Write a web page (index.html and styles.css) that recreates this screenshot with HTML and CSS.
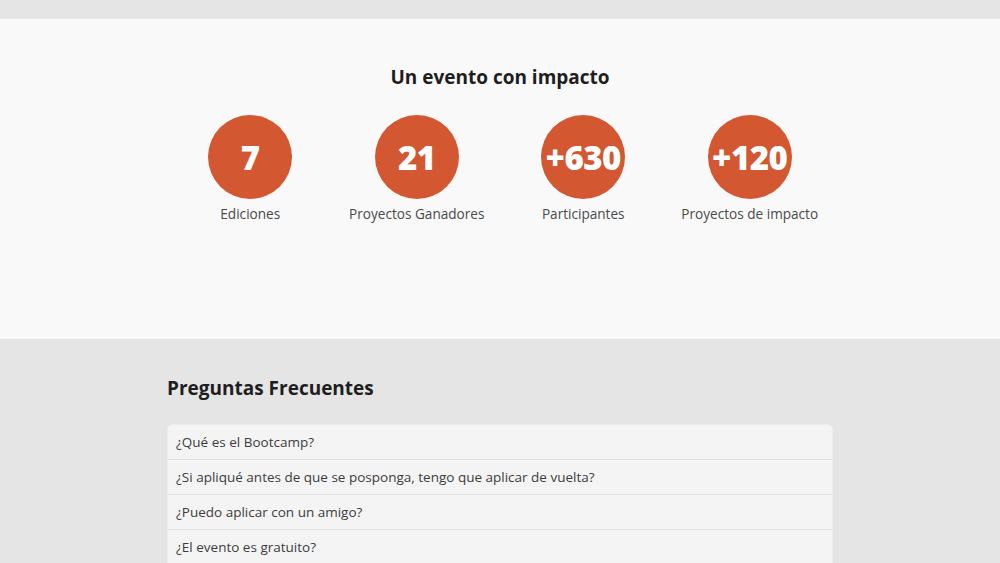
FILE: index.html
```html
<!DOCTYPE html>
<html lang="es">
<head>
<meta charset="utf-8">
<link rel="stylesheet" href="styles.css">
</head>
<body>
<div class="topband"></div>
<section class="impact">
  <h2 class="impact-title">Un evento con impacto</h2>
  <div class="stats">
    <div class="stat"><div class="circle">7</div><div class="label">Ediciones</div></div>
    <div class="stat"><div class="circle">21</div><div class="label">Proyectos Ganadores</div></div>
    <div class="stat"><div class="circle">+630</div><div class="label">Participantes</div></div>
    <div class="stat"><div class="circle">+120</div><div class="label">Proyectos de impacto</div></div>
  </div>
</section>
<section class="faq">
  <div class="faq-inner">
    <h2 class="faq-title">Preguntas Frecuentes</h2>
    <div class="faq-list">
      <div class="faq-item">¿Qué es el Bootcamp?</div>
      <div class="faq-item">¿Si apliqué antes de que se posponga, tengo que aplicar de vuelta?</div>
      <div class="faq-item">¿Puedo aplicar con un amigo?</div>
      <div class="faq-item">¿El evento es gratuito?</div>
    </div>
  </div>
</section>
</body>
</html>
```
FILE: styles.css
```css
* { box-sizing: border-box; }
html, body { margin: 0; padding: 0; }
body {
  font-family: "Open Sans", "Liberation Sans", sans-serif;
  background: #e5e5e5;
  color: #222;
  overflow: hidden;
}
.topband { height: 19px; background: #e5e5e5; }
.impact {
  background: #f9f9f9;
  height: 320px;
  padding-top: 45px;
}
.impact-title {
  margin: 0;
  text-align: center;
  font-size: 19px;
  font-weight: 700;
  line-height: 26px;
  color: #1e1e1e;
}
.stats {
  width: 666px;
  margin: 25px auto 0;
  display: grid;
  grid-template-columns: repeat(4, 1fr);
}
.stat { display: flex; flex-direction: column; align-items: center; }
.circle {
  width: 84px; height: 84px;
  border-radius: 50%;
  background: #d35730;
  color: #fff;
  font-size: 33px;
  font-weight: 800;
  display: flex; align-items: center; justify-content: center;
  letter-spacing: -0.5px;
}
.label {
  margin-top: 5px;
  font-size: 13.6px;
  line-height: 20px;
  color: #4a4a4a;
}
.faq { background: #e5e5e5; padding-top: 35px; }
.faq-inner { width: 666px; margin: 0 auto; }
.faq-title {
  margin: 0 0 22px;
  font-size: 19px;
  font-weight: 700;
  line-height: 28px;
  color: #1e1e1e;
}
.faq-list {
  background: #f4f4f4;
  border-radius: 5px 5px 0 0;
  border: 1px solid #ececec;
}
.faq-item {
  height: 35px;
  padding: 0 8px;
  display: flex; align-items: center;
  font-size: 13.5px;
  color: #3c3c3c;
  border-bottom: 1px solid #e2e2e2;
}
```
